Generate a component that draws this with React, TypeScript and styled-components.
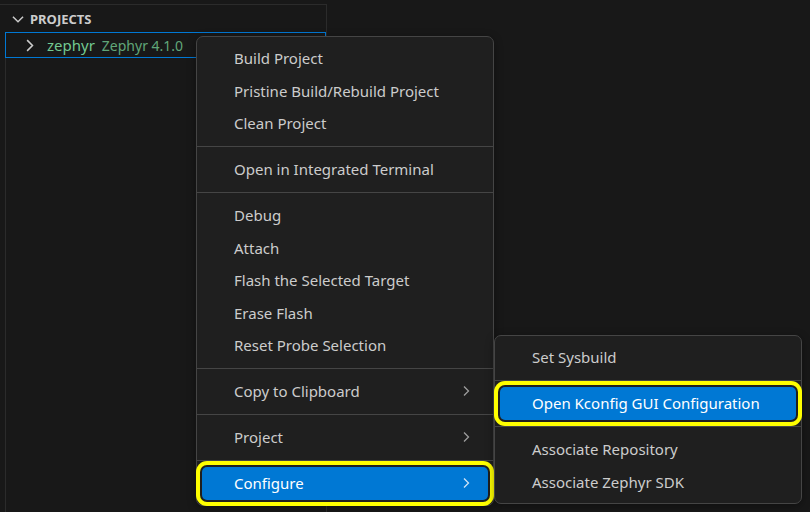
import React from "react";
import styled, { createGlobalStyle } from "styled-components";

type Item = { label: string; submenu?: boolean; active?: boolean };
type Group = Item[];

const mainMenu: Group[] = [
  [{ label: "Build Project" }, { label: "Pristine Build/Rebuild Project" }, { label: "Clean Project" }],
  [{ label: "Open in Integrated Terminal" }],
  [
    { label: "Debug" },
    { label: "Attach" },
    { label: "Flash the Selected Target" },
    { label: "Erase Flash" },
    { label: "Reset Probe Selection" },
  ],
  [{ label: "Copy to Clipboard", submenu: true }],
  [{ label: "Project", submenu: true }],
  [{ label: "Configure", submenu: true, active: true }],
];

const configureMenu: Group[] = [
  [{ label: "Set Sysbuild" }],
  [{ label: "Open Kconfig GUI Configuration", active: true }],
  [{ label: "Associate Repository" }, { label: "Associate Zephyr SDK" }],
];

const Chevron = ({ dir = "right", size = 16 }: { dir?: "right" | "down"; size?: number }) => (
  <svg width={size} height={size} viewBox="0 0 16 16" fill="none">
    {dir === "right" ? (
      <path d="M6 3.5 L10.5 8 L6 12.5" stroke="currentColor" strokeWidth="1.3" />
    ) : (
      <path d="M3.5 6 L8 10.5 L12.5 6" stroke="currentColor" strokeWidth="1.3" />
    )}
  </svg>
);

function Menu({ groups, left, top, width }: { groups: Group[]; left: number; top: number; width: number }) {
  return (
    <MenuBox style={{ left, top, width }}>
      {groups.map((g, gi) => (
        <React.Fragment key={gi}>
          {gi > 0 && <Separator />}
          {g.map((it) => (
            <MenuItem key={it.label} $active={!!it.active}>
              <span>{it.label}</span>
              {it.submenu && (
                <SubArrow $active={!!it.active}>
                  <Chevron />
                </SubArrow>
              )}
            </MenuItem>
          ))}
        </React.Fragment>
      ))}
    </MenuBox>
  );
}

export default function App() {
  return (
    <>
      <GlobalStyle />
      <Page>
        <Sidebar>
          <SectionHeader>
            <HeaderIcon>
              <Chevron dir="down" size={18} />
            </HeaderIcon>
            PROJECTS
          </SectionHeader>
          <TreeRow>
            <RowIcon>
              <Chevron size={19} />
            </RowIcon>
            <ProjectName>zephyr</ProjectName>
            <ProjectDesc>Zephyr 4.1.0</ProjectDesc>
          </TreeRow>
          <TreeBody />
        </Sidebar>
        <Menu groups={mainMenu} left={196} top={36} width={298} />
        <Menu groups={configureMenu} left={494} top={335} width={308} />
      </Page>
    </>
  );
}

// ---------- Styled Components ----------

const GlobalStyle = createGlobalStyle`
  html, body {
    margin: 0;
    padding: 0;
    background: #181818;
  }
  body {
    font-family: "Noto Sans", "Open Sans", sans-serif;
    color: #cccccc;
  }
`;

const Page = styled.div`
  position: relative;
  width: 810px;
  height: 512px;
  overflow: hidden;
  background: #181818;
`;

const Sidebar = styled.div`
  width: 327px;
  height: 100%;
  box-sizing: border-box;
  margin-top: 4px;
  border-top: 1px solid #2b2b2b;
  border-right: 1px solid #2b2b2b;
  display: flex;
  flex-direction: column;
`;

const SectionHeader = styled.div`
  height: 27px;
  display: flex;
  align-items: center;
  padding-left: 9px;
  gap: 3px;
  font-family: "Noto Sans", sans-serif;
  font-size: 13px;
  font-weight: 700;
  color: #cccccc;
`;

const HeaderIcon = styled.span`
  display: flex;
  color: #cccccc;
`;

const TreeRow = styled.div`
  height: 26px;
  box-sizing: border-box;
  margin-left: 5px;
  border: 1px solid #0078d4;
  display: flex;
  align-items: center;
  padding-left: 14px;
  font-size: 15px;
`;

const RowIcon = styled.span`
  display: flex;
  color: #cccccc;
  margin-right: 8px;
`;

const ProjectName = styled.span`
  color: #73c991;
  margin-right: 7px;
`;

const ProjectDesc = styled.span`
  color: #73c991;
  opacity: 0.8;
  font-size: 14px;
`;

const TreeBody = styled.div`
  flex: 1;
  margin-left: 5px;
  border-left: 1px solid #2b2b2b;
`;

const MenuBox = styled.div`
  position: absolute;
  box-sizing: border-box;
  background: #1f1f1f;
  border: 1px solid #454545;
  border-radius: 7px;
  padding: 5px 0;
  box-shadow: 0 2px 8px rgba(0, 0, 0, 0.36);
`;

const Separator = styled.div`
  height: 1px;
  background: #454545;
  margin: 6px 0 6.5px;
`;

const MenuItem = styled.div<{ $active: boolean }>`
  height: 32.5px;
  margin: 0 5px;
  padding: 0 14px 0 32px;
  display: flex;
  align-items: center;
  justify-content: space-between;
  border-radius: 5px;
  font-size: 15px;
  white-space: nowrap;
  color: ${({ $active }) => ($active ? "#ffffff" : "#cccccc")};
  background: ${({ $active }) => ($active ? "#0078d4" : "transparent")};
  box-shadow: ${({ $active }) =>
    $active ? "0 0 0 2px #1f1f1f, 0 0 0 6px #ffff00" : "none"};
`;

const SubArrow = styled.span<{ $active: boolean }>`
  display: flex;
  color: ${({ $active }) => ($active ? "#cfe4f7" : "#9d9d9d")};
`;
